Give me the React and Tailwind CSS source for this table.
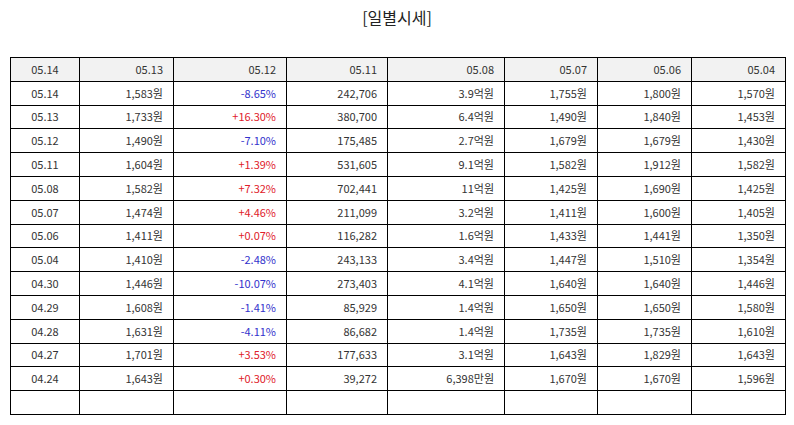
import React from "react";

const headers = ["05.14", "05.13", "05.12", "05.11", "05.08", "05.07", "05.06", "05.04"];

const rows = [
  ["05.14", "1,583원", "-8.65%", "242,706", "3.9억원", "1,755원", "1,800원", "1,570원"],
  ["05.13", "1,733원", "+16.30%", "380,700", "6.4억원", "1,490원", "1,840원", "1,453원"],
  ["05.12", "1,490원", "-7.10%", "175,485", "2.7억원", "1,679원", "1,679원", "1,430원"],
  ["05.11", "1,604원", "+1.39%", "531,605", "9.1억원", "1,582원", "1,912원", "1,582원"],
  ["05.08", "1,582원", "+7.32%", "702,441", "11억원", "1,425원", "1,690원", "1,425원"],
  ["05.07", "1,474원", "+4.46%", "211,099", "3.2억원", "1,411원", "1,600원", "1,405원"],
  ["05.06", "1,411원", "+0.07%", "116,282", "1.6억원", "1,433원", "1,441원", "1,350원"],
  ["05.04", "1,410원", "-2.48%", "243,133", "3.4억원", "1,447원", "1,510원", "1,354원"],
  ["04.30", "1,446원", "-10.07%", "273,403", "4.1억원", "1,640원", "1,640원", "1,446원"],
  ["04.29", "1,608원", "-1.41%", "85,929", "1.4억원", "1,650원", "1,650원", "1,580원"],
  ["04.28", "1,631원", "-4.11%", "86,682", "1.4억원", "1,735원", "1,735원", "1,610원"],
  ["04.27", "1,701원", "+3.53%", "177,633", "3.1억원", "1,643원", "1,829원", "1,643원"],
  ["04.24", "1,643원", "+0.30%", "39,272", "6,398만원", "1,670원", "1,670원", "1,596원"],
];

const widths = ["w-[69px]", "w-[94px]", "w-[113px]", "w-[101px]", "w-[117px]", "w-[93px]", "w-[94px]", "w-[94px]"];

function Cell({ i, children, className = "" }) {
  const align = i === 0 ? "text-center" : "text-right pr-[10px]";
  return (
    <td className={`border border-black h-[23.8px] p-0 ${align} ${className}`}>{children}</td>
  );
}

export default function App() {
  return (
    <div
      className="w-[794px] h-[425px] bg-white text-[#333] overflow-hidden"
      style={{ fontFamily: '"Noto Sans CJK KR", "Noto Sans", sans-serif' }}
    >
      <h1 className="text-center text-[16px] leading-[20px] pt-[7px] text-[#222]">[일별시세]</h1>
      <table className="ml-[10px] mt-[30px] w-[775px] table-fixed border-collapse text-[11px] leading-none">
        <colgroup>
          {widths.map((w, i) => (
            <col key={i} className={w} />
          ))}
        </colgroup>
        <thead>
          <tr className="bg-[#f2f2f2]">
            {headers.map((h, i) => (
              <Cell key={i} i={i}>
                {h}
              </Cell>
            ))}
          </tr>
        </thead>
        <tbody>
          {rows.map((r, ri) => (
            <tr key={ri}>
              {r.map((v, i) => {
                let color = "";
                if (i === 2) color = v.startsWith("+") ? "text-[#e0202a]" : "text-[#3333cc]";
                return (
                  <Cell key={i} i={i} className={color}>
                    {v}
                  </Cell>
                );
              })}
            </tr>
          ))}
          <tr>
            {headers.map((_, i) => (
              <Cell key={i} i={i} />
            ))}
          </tr>
        </tbody>
      </table>
    </div>
  );
}
